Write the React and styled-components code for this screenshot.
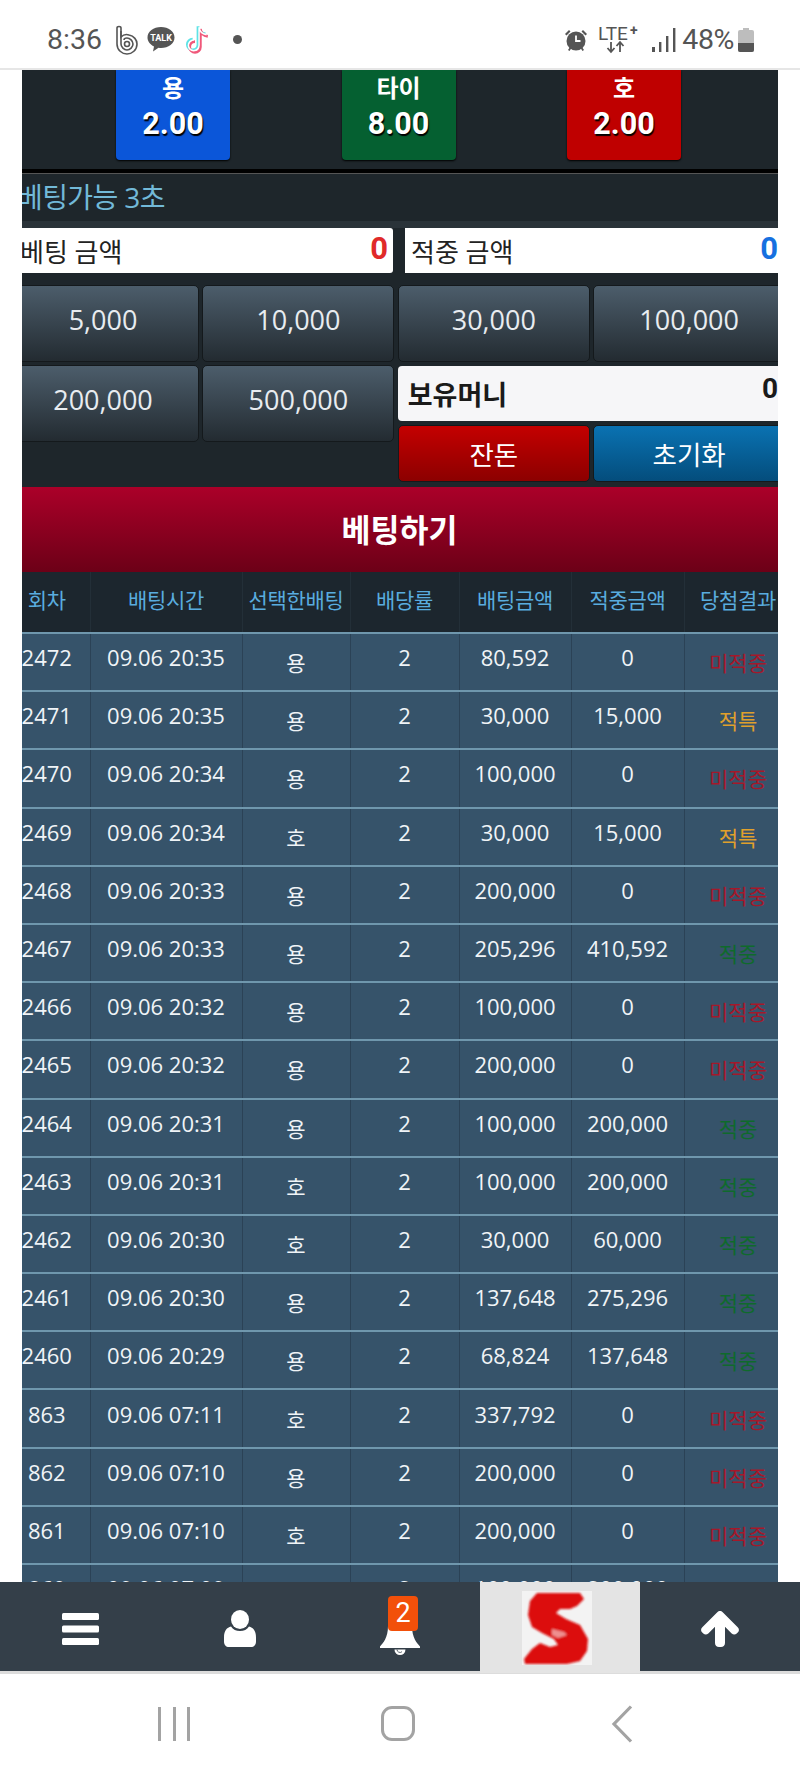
import React from 'react';
import styled, { createGlobalStyle } from 'styled-components';

const Global = createGlobalStyle`
  html, body { margin: 0; padding: 0; background: #fff; }
  * { box-sizing: border-box; }
`;

const KR = `"Open Sans", "Noto Sans CJK KR", sans-serif`;

const Screen = styled.div`
  width: 800px; height: 1778px; overflow: hidden;
  display: flex; flex-direction: column;
  font-family: ${KR}; background: #fff;
`;

const StatusBar = styled.div`
  height: 70px; flex: none; display: flex; align-items: center;
  padding: 11px 46px 0 47px; background: #fff;
  border-bottom: 2px solid #e6e6e6; color: #555;
`;
const Clock = styled.span`
  font: 400 28.5px Roboto, sans-serif; width: 68px;
`;
const StatusGroup = styled.div`
  display: flex; align-items: center; gap: ${p => p.$gap || 8}px;
  margin-left: ${p => p.$auto ? 'auto' : '0'};
`;
const PercentGroup = styled.div`
  display: flex; align-items: center; gap: 4px; margin-left: -4px;
`;
const Percent = styled.span`
  font: 400 28.5px Roboto, sans-serif; letter-spacing: -0.4px;
`;
const Dot = styled.span`
  width: 9px; height: 9px; border-radius: 50%; background: #555; margin-left: 20px;
`;

const Viewport = styled.div`
  height: 1512px; flex: none; padding: 0 22px;
`;
const Clip = styled.div`
  height: 100%; overflow: hidden;
`;
const Page = styled.div`
  width: 783px; margin-left: -15px; background: #1e262b;
`;

const OddsRow = styled.div`
  height: 99px; display: grid; grid-template-columns: repeat(3, 114px);
  padding-left: 109px; column-gap: 111.5px;
`;
const colors = { blue: '#0b56d9', green: '#056031', red: '#bf0000' };
const OddsButton = styled.div`
  height: 90px; background: ${p => colors[p.$c]}; border-radius: 0 0 4px 4px;
  box-shadow: 0 1px 2px #000; color: #fff; text-align: center;
  display: flex; flex-direction: column; align-items: center;
`;
const OddsName = styled.span`
  font-size: 24px; font-weight: 700; line-height: 36px;
`;
const OddsValue = styled.span`
  font: 700 30.5px/36px Roboto, sans-serif; text-shadow: 1px 2px 1px #000;
`;
const BlackBar = styled.div`
  height: 5px; background: #000; border-bottom: 1px solid #555;
`;
const TitleBar = styled.div`
  height: 47px; padding: 0 0 4px 10px; display: flex; align-items: center;
  color: #72b9d8; font-size: 28px; letter-spacing: -0.6px; font-weight: 400;
`;
const Strip = styled.div`height: 7px; background: #2a3339;`;

const Fields = styled.div`
  display: grid; grid-template-columns: 386px 378px; column-gap: 12px;
  padding-bottom: 12px;
`;
const Field = styled.div`
  height: 45px; background: #fff; border-radius: 0 3px 3px 0;
  padding: 0 ${p => p.$r}px 0 ${p => p.$l}px;
  display: flex; justify-content: space-between; align-items: center;
  font-size: 26px; color: #222;
`;
const FieldValue = styled.b`
  font: 700 31px Roboto, sans-serif; color: ${p => p.$color}; margin-top: -4px;
`;

const ChipGrid = styled.div`
  display: grid; grid-template-columns: repeat(4, 192px); column-gap: 3.4px; row-gap: 3px;
  padding-bottom: 5px; align-items: start;
`;
const Chip = styled.div`
  height: 77px; border: 1px solid #14191c; border-radius: 5px;
  background: linear-gradient(#4c5d6b, #232b31); color: #e8ecf0;
  display: flex; align-items: center; justify-content: center;
  font-size: 27px; padding-bottom: 8px;
`;
const Wallet = styled.div`
  grid-column: 3 / 5; margin-top: 1px; display: grid;
  grid-template-columns: 192px 192px; column-gap: 3.4px; row-gap: 4px;
`;
const Money = styled.div`
  grid-column: 1 / 3; height: 55px; background: #f6f6f8; border-radius: 4px;
  display: flex; justify-content: space-between; padding: 0 7px 0 10px;
  align-items: center; font-size: 27px; font-weight: 700; color: #1a1a1a;
`;
const MoneyValue = styled.span`
  font: 700 28px Roboto, sans-serif; margin-top: -10px;
`;
const ActionButton = styled.div`
  height: 57px; border: 1px solid #14191c; border-radius: 5px;
  background: ${p => p.$blue ? 'linear-gradient(#0a72b2, #044d7c)' : 'linear-gradient(#c40000, #8c0000)'};
  color: #fff; font-size: 26.5px; display: flex; align-items: center; justify-content: center;
`;
const Submit = styled.div`
  height: 85px; background: linear-gradient(#ab0029, #6c0017);
  color: #fff; font-size: 31.5px; font-weight: 700;
  display: flex; align-items: center; justify-content: center; padding: 0 0 4px 2px;
`;

const Table = styled.table`
  width: 788px; margin-left: -3px; table-layout: fixed; border-collapse: collapse;
`;
const HeadCell = styled.th`
  height: 61px; background: #1c262e; color: #59acdf; font-weight: 400;
  font-size: 21px; padding: 0 0 6px; white-space: nowrap; text-align: center;
  border-right: 1px solid #232f38; border-bottom: 2px solid #6f97ad;
  letter-spacing: -0.3px;
`;
const Cell = styled.td`
  height: 58.2px; padding: 0 0 10px; background: #36536a; color: #f0f4f7;
  font-size: 22px; text-align: center; white-space: nowrap;
  border-right: 1px solid #2b4256; border-bottom: 2px solid #6f97ad;
`;
const KoreanCell = styled(Cell)`
  font-size: 21px; padding-bottom: 0; color: ${p => p.$color || '#f0f4f7'};
`;

const Nav = styled.div`
  height: 93px; flex: none; display: grid; grid-template-columns: repeat(5, 160px);
  background: linear-gradient(#343f49 0, #343f49 89px, #dcdcdc 89px, #dcdcdc 92px, #fff 92px);
`;
const NavItem = styled.div`
  height: 89px; display: flex; align-items: center; justify-content: center;
  position: relative; padding-top: ${p => p.$pt || 0}px;
`;
const LogoCell = styled.div`
  height: 91px; background: #e4e4e4; display: flex; align-items: center;
  justify-content: flex-start; padding-left: 42px;
`;
const Badge = styled.span`
  position: absolute; left: 68px; top: 14px; width: 30px; height: 35px;
  background: #f2500a; border-radius: 4px; color: #fff;
  font: 400 27px/35px Roboto, sans-serif; text-align: center;
`;

const SoftKeys = styled.div`
  flex: 1; display: flex; align-items: center; padding: 0 0 6px 158px; color: #9a9a9a;
`;
const RecentKey = styled.div`
  width: 32px; height: 34px; display: flex; justify-content: space-between;
  & > i { width: 3px; background: #a3a3a3; }
`;
const HomeKey = styled.div`
  width: 34px; height: 35px; border: 3.5px solid #a3a3a3; border-radius: 11px; margin-left: 191px;
`;
const BackKey = styled.svg`margin-left: 196px;`;

const rows = [
  ['2472', '09.06 20:35', '용', '80,592', '0', 'm'],
  ['2471', '09.06 20:35', '용', '30,000', '15,000', 't'],
  ['2470', '09.06 20:34', '용', '100,000', '0', 'm'],
  ['2469', '09.06 20:34', '호', '30,000', '15,000', 't'],
  ['2468', '09.06 20:33', '용', '200,000', '0', 'm'],
  ['2467', '09.06 20:33', '용', '205,296', '410,592', 'w'],
  ['2466', '09.06 20:32', '용', '100,000', '0', 'm'],
  ['2465', '09.06 20:32', '용', '200,000', '0', 'm'],
  ['2464', '09.06 20:31', '용', '100,000', '200,000', 'w'],
  ['2463', '09.06 20:31', '호', '100,000', '200,000', 'w'],
  ['2462', '09.06 20:30', '호', '30,000', '60,000', 'w'],
  ['2461', '09.06 20:30', '용', '137,648', '275,296', 'w'],
  ['2460', '09.06 20:29', '용', '68,824', '137,648', 'w'],
  ['863', '09.06 07:11', '호', '337,792', '0', 'm'],
  ['862', '09.06 07:10', '용', '200,000', '0', 'm'],
  ['861', '09.06 07:10', '호', '200,000', '0', 'm'],
  ['860', '09.06 07:09', '용', '100,000', '200,000', 'w'],
];
const results = {
  m: ['미적중', '#a5182a'],
  t: ['적특', '#e0a02c'],
  w: ['적중', '#0f6a2c'],
};
const widths = [86, 152, 108, 109, 112, 113, 108];
const heads = ['회차', '배팅시간', '선택한배팅', '배당률', '배팅금액', '적중금액', '당첨결과'];

const BLogo = () => (
  <svg width="24" height="30" viewBox="0 0 24 30" fill="none" stroke="#555" strokeWidth="1.6">
    <path d="M2 3c0-2 4-2 4 0v9c2-2 5-3 8-2 5 1 8 5 8 9 0 6-5 10-10 10S2 25 2 19z" />
    <path d="M6 6v13c0 3 3 6 6 6s6-3 6-6-3-6-6-6-3 2-3 2" />
    <circle cx="12" cy="19" r="2.5" />
  </svg>
);
const TalkIcon = () => (
  <svg width="28" height="27" viewBox="0 0 28 27">
    <path d="M14 1C6.500 1 .5 5.500.5 11.500c0 4 2.700 7 6.500 9l-1 5 5.500-3.800c1 .2 1.700.3 2.500.3 7.500 0 13.500-4.500 13.500-10.500S21.500 1 14 1z" fill="#555" />
    <text x="14" y="15" textAnchor="middle" fontFamily="Roboto, sans-serif" fontSize="9" fontWeight="700" fill="#fff">TALK</text>
  </svg>
);
const tiktok = 'M15 3v17a5 5 0 1 1-5-5M15 3c.5 4 3 6.500 7 7';
const TikTok = () => (
  <svg width="30" height="32" viewBox="0 0 28 30" fill="none" strokeWidth="2.600">
    <path d={tiktok} stroke="#5fe3e6" transform="translate(-1 -.8)" />
    <path d={tiktok} stroke="#f0587a" transform="translate(1.200 1.600)" />
    <path d={tiktok} stroke="#fff" strokeWidth="1.400" />
  </svg>
);
const Alarm = () => (
  <svg width="24" height="24" viewBox="0 0 24 24" fill="#555">
    <circle cx="12" cy="13" r="9.500" />
    <path d="M12 7.500V13h4.500" fill="none" stroke="#fff" strokeWidth="1.800" />
    <path d="M1 6l4-4 1.500 1.500-4 4zM23 6l-4-4-1.500 1.500 4 4zM4 22l2-3 1.500 1-2 3zM20 22l-2-3-1.500 1 2 3z" />
  </svg>
);
const Lte = () => (
  <svg width="44" height="30" viewBox="0 0 44 30">
    <text x="0" y="15" fontFamily="Roboto, sans-serif" fontSize="19" fill="#555">LTE</text>
    <text x="32" y="10" fontFamily="Roboto, sans-serif" fontSize="14" fontWeight="700" fill="#555">+</text>
    <path d="M13 17v9M9.500 23l3.500 4 3.500-4M22 27v-9M18.500 21l3.500-4 3.500 4" fill="none" stroke="#555" strokeWidth="1.800" />
  </svg>
);
const Signal = () => (
  <svg width="24" height="26" viewBox="0 0 24 26" fill="#555">
    <rect x="0" y="20" width="3" height="5" />
    <rect x="7" y="15" width="2.400" height="10" />
    <rect x="14" y="9" width="2.400" height="16" />
    <rect x="21" y="1" width="2.400" height="24" />
  </svg>
);
const Battery = () => (
  <svg width="16" height="24" viewBox="0 0 16 24">
    <path d="M5 0h6v2h3a2 2 0 0 1 2 2v18a2 2 0 0 1-2 2H2a2 2 0 0 1-2-2V4a2 2 0 0 1 2-2h3z" fill="#bdbdbd" />
    <path d="M0 15h16v7a2 2 0 0 1-2 2H2a2 2 0 0 1-2-2z" fill="#555" />
  </svg>
);
const BarsIcon = () => (
  <svg width="37" height="32" viewBox="0 0 37 32" fill="#fff">
    <rect y="0" width="37" height="7" rx="1.500" />
    <rect y="12.500" width="37" height="7" rx="1.500" />
    <rect y="25" width="37" height="7" rx="1.500" />
  </svg>
);
const UserIcon = () => (
  <svg width="32" height="37" viewBox="0 0 32 37" fill="#fff">
    <ellipse cx="16" cy="9.500" rx="9" ry="9.500" />
    <path d="M7 16.500c2 3 5 4.500 9 4.500s7-1.500 9-4.500c4 1 7 4 7 11v4c0 3.500-2 5.500-5 5.500H5c-3 0-5-2-5-5.500v-4c0-7 3-10 7-11z" />
  </svg>
);
const BellIcon = () => (
  <svg width="40" height="44" viewBox="0 0 40 44" fill="#fff">
    <path d="M20 1c-7 0-12 5-12 13 0 12-5 17-8 20.500v1.500h40v-1.500C37 31 32 26 32 14 32 6 27 1 20 1z" />
    <path d="M14.500 37.500a5.500 5.500 0 0 0 11 0z" />
    <path d="M17 37.500a3 3 0 0 0 5 2.200" fill="none" stroke="#343f49" strokeWidth=".8" />
  </svg>
);
const ArrowIcon = () => (
  <svg width="38" height="36" viewBox="0 0 38 36" fill="#fff">
    <path d="M19 0c1 0 2 .5 2.700 1.200l15 15c1.600 1.700 1.600 3.600.3 5l-1.300 1.300c-1.500 1.400-3.500 1.400-5-.1L24 15.700V32c0 2.500-1.800 4-4 4h-2c-2.200 0-4-1.500-4-4V15.700L7.300 22.400c-1.500 1.500-3.500 1.500-5 .1L1 21.200c-1.300-1.400-1.300-3.300.3-5l15-15C17 .5 18 0 19 0z" />
  </svg>
);
const SLogo = () => (
  <svg width="70" height="74" viewBox="0 0 70 74">
    <defs>
      <filter id="soft" x="-10%" y="-10%" width="120%" height="120%">
        <feGaussianBlur stdDeviation="1.300" />
      </filter>
    </defs>
    <rect width="70" height="74" fill="#f3f3f3" />
    <g filter="url(#soft)">
      <path d="M15 2H58L62 8 55 15 48 18H38L34 22 44 28 58 34 66 48 65 60 58 70 45 73H3L2 68 10 58 18 52 28 56 36 54 32 48 20 42 10 36 6 24 8 10Z" fill="#dc1010" />
      <path d="M30 38l12 3 3 3-9 3-6-3z" fill="#ee8f8f" />
    </g>
  </svg>
);

export default function App() {
  return (
    <Screen>
      <Global />
      <StatusBar>
        <Clock>8:36</Clock>
        <StatusGroup $gap={8}>
          <BLogo />
          <TalkIcon />
          <TikTok />
        </StatusGroup>
        <Dot />
        <StatusGroup $auto $gap={10}>
          <Alarm />
          <Lte />
          <Signal />
          <PercentGroup>
            <Percent>48%</Percent>
            <Battery />
          </PercentGroup>
        </StatusGroup>
      </StatusBar>

      <Viewport>
        <Clip>
          <Page>
            <OddsRow>
              <OddsButton $c="blue"><OddsName>용</OddsName><OddsValue>2.00</OddsValue></OddsButton>
              <OddsButton $c="green"><OddsName>타이</OddsName><OddsValue>8.00</OddsValue></OddsButton>
              <OddsButton $c="red"><OddsName>호</OddsName><OddsValue>2.00</OddsValue></OddsButton>
            </OddsRow>
            <BlackBar />
            <TitleBar>베팅가능 3초</TitleBar>
            <Strip />
            <Fields>
              <Field $l={13} $r={5}>
                <span>베팅 금액</span>
                <FieldValue $color="#e02a2a">0</FieldValue>
              </Field>
              <Field $l={6} $r={5}>
                <span>적중 금액</span>
                <FieldValue $color="#1670e0">0</FieldValue>
              </Field>
            </Fields>
            <ChipGrid>
              {['5,000', '10,000', '30,000', '100,000', '200,000', '500,000'].map(v => (
                <Chip key={v}>{v}</Chip>
              ))}
              <Wallet>
                <Money><span>보유머니</span><MoneyValue>0</MoneyValue></Money>
                <ActionButton>잔돈</ActionButton>
                <ActionButton $blue>초기화</ActionButton>
              </Wallet>
            </ChipGrid>
            <Submit>베팅하기</Submit>
            <Table>
              <colgroup>
                {widths.map((w, i) => <col key={i} width={w} />)}
              </colgroup>
              <thead>
                <tr>{heads.map(h => <HeadCell key={h}>{h}</HeadCell>)}</tr>
              </thead>
              <tbody>
                {rows.map(r => (
                  <tr key={r[0]}>
                    <Cell>{r[0]}</Cell>
                    <Cell>{r[1]}</Cell>
                    <KoreanCell>{r[2]}</KoreanCell>
                    <Cell>2</Cell>
                    <Cell>{r[3]}</Cell>
                    <Cell>{r[4]}</Cell>
                    <KoreanCell $color={results[r[5]][1]}>{results[r[5]][0]}</KoreanCell>
                  </tr>
                ))}
              </tbody>
            </Table>
          </Page>
        </Clip>
      </Viewport>

      <Nav>
        <NavItem $pt={4}><BarsIcon /></NavItem>
        <NavItem $pt={4}><UserIcon /></NavItem>
        <NavItem $pt={14}>
          <BellIcon />
          <Badge>2</Badge>
        </NavItem>
        <LogoCell><SLogo /></LogoCell>
        <NavItem $pt={4}><ArrowIcon /></NavItem>
      </Nav>
      <SoftKeys>
        <RecentKey><i /><i /><i /></RecentKey>
        <HomeKey />
        <BackKey width="22" height="38" viewBox="0 0 22 38" fill="none" stroke="#a3a3a3" strokeWidth="3.200">
          <path d="M20 1.500L3 19l17 17.500" />
        </BackKey>
      </SoftKeys>
    </Screen>
  );
}
